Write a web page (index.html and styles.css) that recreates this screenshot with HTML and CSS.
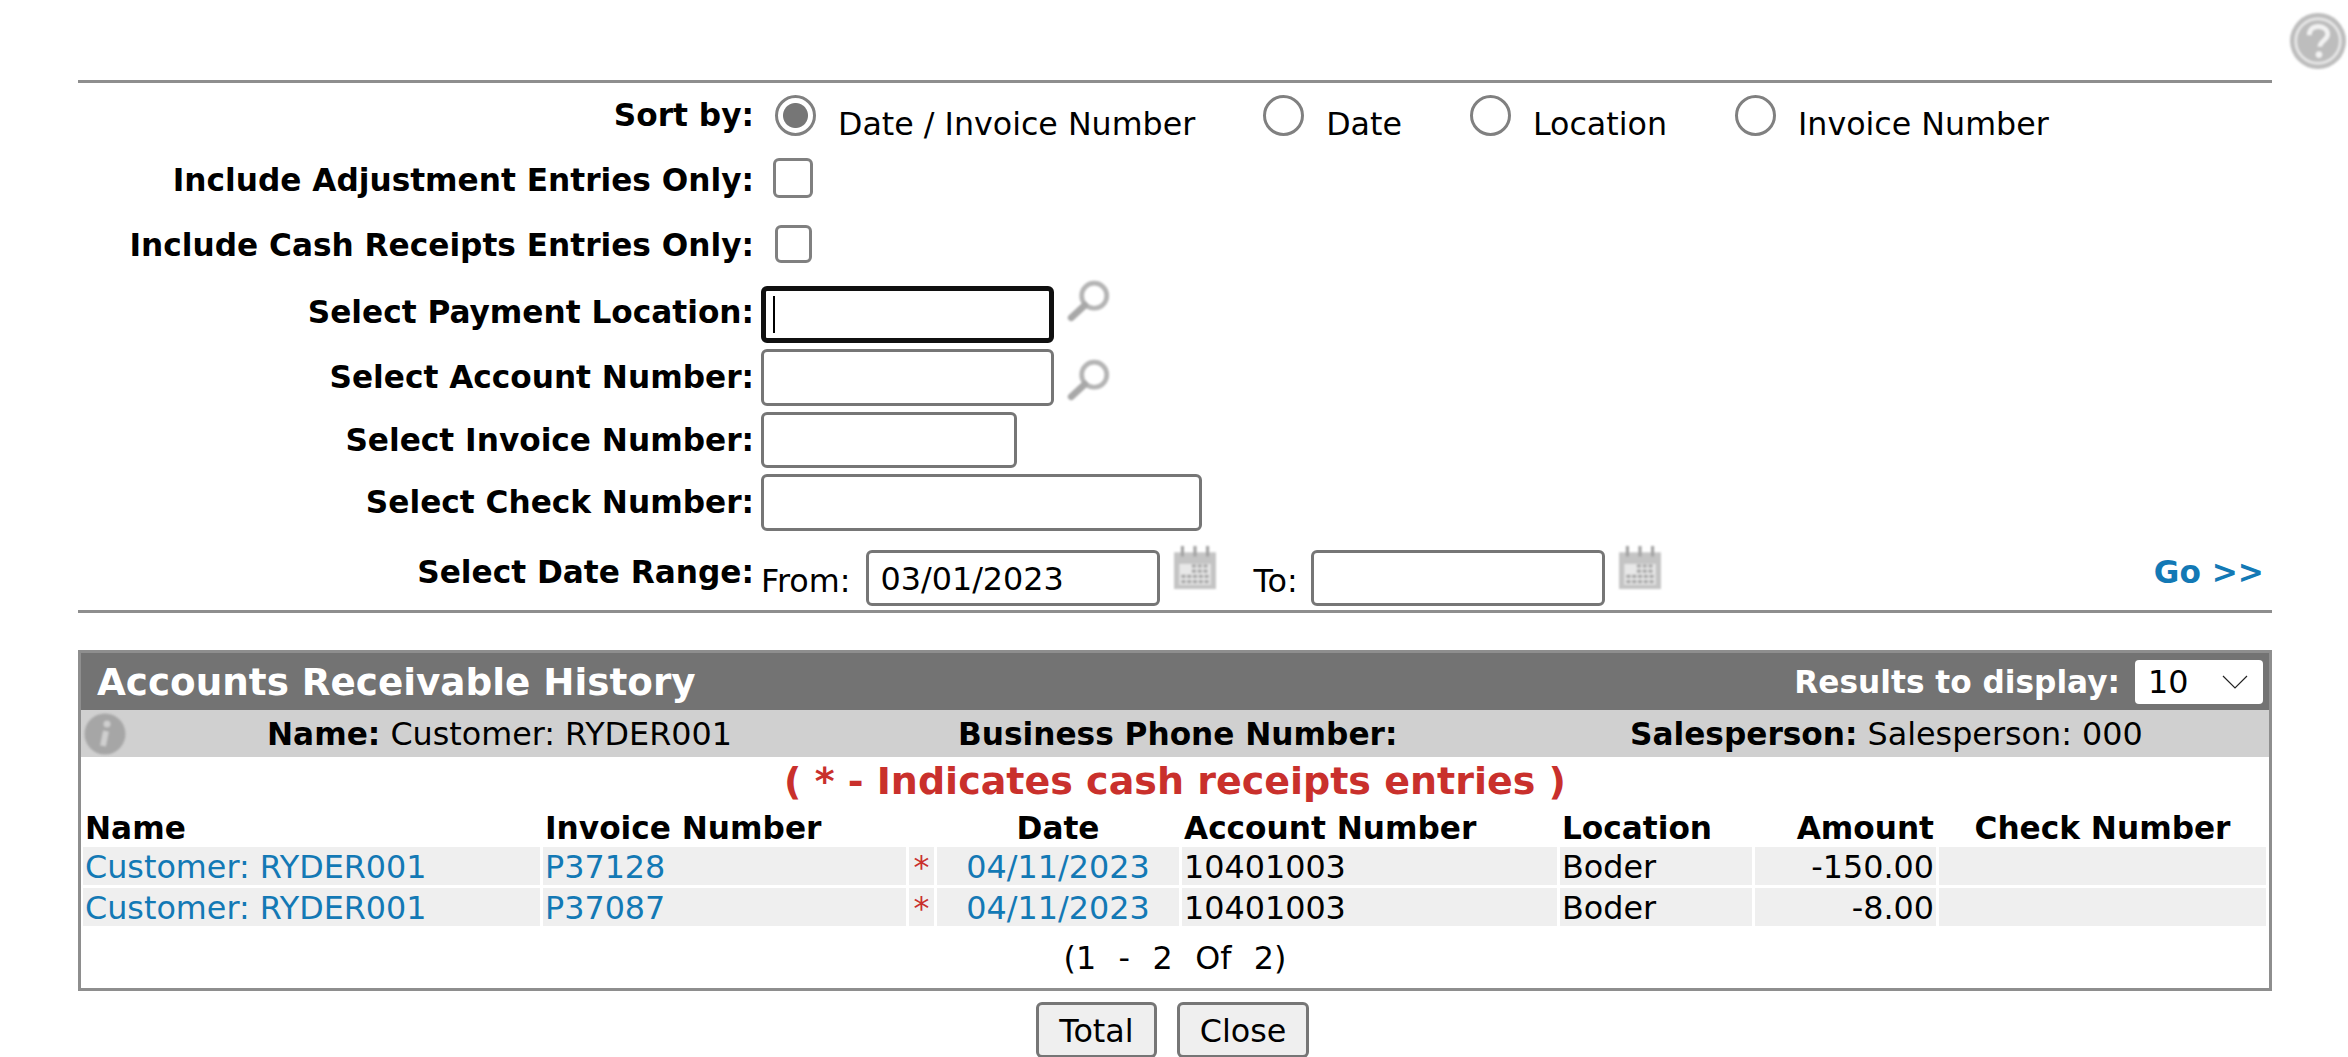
FILE: index.html
```html
<!DOCTYPE html>
<html lang="en">
<head>
  <meta charset="UTF-8"/>
  <title>Accounts Receivable History</title>
  <link rel="stylesheet" href="styles.css">
</head>
<body>

  <div class="help-bar">
    <svg class="help-icon" viewBox="0 0 60 60">
      <circle cx="30" cy="30" r="29" fill="#bdbdbd"/>
      <circle cx="30" cy="30" r="23" fill="none" stroke="#e6e6e6" stroke-width="3"/>
      <path d="M21 24c0-6 4-9 9.500-9s9.500 3.500 9.500 8c0 6-8 7-8 13" fill="none" stroke="#f2f2f2" stroke-width="5"/>
      <circle cx="31" cy="44" r="3.500" fill="#f2f2f2"/>
    </svg>
  </div>

  <div class="page">
    <form class="filters">
      <div class="row row-sort">
        <label class="row-label">Sort by:</label>
        <div class="radios">
          <label class="radio-opt"><input type="radio" name="sort" checked><span>Date / Invoice Number</span></label>
          <label class="radio-opt"><input type="radio" name="sort"><span>Date</span></label>
          <label class="radio-opt"><input type="radio" name="sort"><span>Location</span></label>
          <label class="radio-opt"><input type="radio" name="sort"><span>Invoice Number</span></label>
        </div>
      </div>
      <div class="row row-adj">
        <label class="row-label">Include Adjustment Entries Only:</label>
        <input type="checkbox" class="check">
      </div>
      <div class="row row-cash">
        <label class="row-label">Include Cash Receipts Entries Only:</label>
        <input type="checkbox" class="check check-small">
      </div>
      <div class="row row-payment">
        <label class="row-label">Select Payment Location:</label>
        <input type="text" class="field field-md focused">
        <svg class="lookup lookup-high" viewBox="0 0 44 44"><use href="#glass"/></svg>
      </div>
      <div class="row row-account">
        <label class="row-label">Select Account Number:</label>
        <input type="text" class="field field-md">
        <svg class="lookup lookup-low" viewBox="0 0 44 44"><use href="#glass"/></svg>
      </div>
      <div class="row">
        <label class="row-label">Select Invoice Number:</label>
        <input type="text" class="field field-sm">
      </div>
      <div class="row row-check">
        <label class="row-label">Select Check Number:</label>
        <input type="text" class="field field-lg">
      </div>
      <div class="row row-date">
        <label class="row-label">Select Date Range:</label>
        <span class="date-word">From:</span>
        <input type="text" class="field field-date" value="03/01/2023">
        <svg class="cal" viewBox="0 0 42 42"><use href="#calendar"/></svg>
        <span class="date-word date-to">To:</span>
        <input type="text" class="field field-date">
        <svg class="cal" viewBox="0 0 42 42"><use href="#calendar"/></svg>
        <a href="#" class="go">Go &gt;&gt;</a>
      </div>
    </form>

    <section class="panel">
      <div class="panel-head">
        <h2>Accounts Receivable History</h2>
        <div class="results">
          <label>Results to display:</label>
          <div class="select-box">10
            <svg viewBox="0 0 26 14"><path d="M1 1l12 12L25 1" fill="none" stroke="#222" stroke-width="1.200"/></svg>
          </div>
        </div>
      </div>
      <div class="info-row">
        <div class="info-icon-cell">
          <svg class="info-icon" viewBox="0 0 42 42">
            <circle cx="21" cy="21" r="20.500" fill="#a6a6a6"/>
            <circle cx="23" cy="11" r="3.500" fill="#cfcfcf"/>
            <path d="M22 18l-3 15" stroke="#cfcfcf" stroke-width="6" fill="none"/>
          </svg>
        </div>
        <div><b>Name:</b> Customer: RYDER001</div>
        <div><b>Business Phone Number:</b></div>
        <div><b>Salesperson:</b> Salesperson: 000</div>
      </div>
      <p class="legend">( * - Indicates cash receipts entries )</p>
      <table class="history">
        <colgroup>
          <col class="c-name"><col class="c-inv"><col class="c-star"><col class="c-date">
          <col class="c-acct"><col class="c-loc"><col class="c-amt"><col class="c-chk">
        </colgroup>
        <thead>
          <tr>
            <th>Name</th><th>Invoice Number</th><th></th><th class="center">Date</th>
            <th>Account Number</th><th>Location</th><th class="right">Amount</th><th class="center">Check Number</th>
          </tr>
        </thead>
        <tbody>
          <tr>
            <td><a href="#">Customer: RYDER001</a></td><td><a href="#">P37128</a></td><td class="star">*</td>
            <td class="center"><a href="#">04/11/2023</a></td><td>10401003</td><td>Boder</td><td class="right">-150.00</td><td></td>
          </tr>
          <tr>
            <td><a href="#">Customer: RYDER001</a></td><td><a href="#">P37087</a></td><td class="star">*</td>
            <td class="center"><a href="#">04/11/2023</a></td><td>10401003</td><td>Boder</td><td class="right">-8.00</td><td></td>
          </tr>
        </tbody>
      </table>
      <div class="pager">(1&nbsp; -&nbsp; 2&nbsp; Of&nbsp; 2)</div>
    </section>

    <div class="actions">
      <button type="button" class="btn-total">Total</button>
      <button type="button" class="btn-close">Close</button>
    </div>
  </div>

  <svg class="defs" width="0" height="0">
    <defs>
      <g id="glass">
        <circle cx="27" cy="16" r="12" fill="none" stroke="#b4b4b4" stroke-width="4.500"/>
        <path d="M18 25L5 37" stroke="#a8a8a8" stroke-width="6.500" stroke-linecap="round"/>
      </g>
      <g id="calendar">
        <rect x="1" y="7" width="40" height="35" fill="#c4c4c4"/>
        <path d="M9 1v10M21 1v10M33 1v10" stroke="#a2a2a2" stroke-width="3"/>
        <rect x="6" y="18" width="30" height="20" fill="#e8e8e8"/>
        <path d="M18 20h16M18 25h16M8 30h26M8 35h26" stroke="#a8a8a8" stroke-width="3" stroke-dasharray="4 1.500"/>
      </g>
    </defs>
  </svg>

</body>
</html>
```

FILE: styles.css
```css
html, body { height: 100%; overflow: hidden; }
body {
  margin: 0;
  background: #fff;
  color: #000;
  font-family: "DejaVu Sans", Verdana, sans-serif;
  font-size: 31.8px;
}
a { color: #1379b5; text-decoration: none; }
b, .row-label, .history th, .results label, .go { font-size: 31.2px; font-weight: bold; }

.help-bar { display: flex; justify-content: flex-end; height: 80px; padding: 12px 1px 0 0; box-sizing: border-box; }
.help-icon { width: 58px; height: 58px; filter: blur(1px); }
.defs { position: absolute; }

.page { margin: 0 76px 0 78px; }

/* Filter form */
.filters { border-top: 3px solid #8e8e8e; border-bottom: 3px solid #8e8e8e; padding: 12px 0 4px; }
.row { display: flex; align-items: center; margin-bottom: 6px; }
.row-label { width: 676px; margin-right: 7px; text-align: right; white-space: nowrap; }
.row-sort { margin-bottom: 22px; align-items: flex-start; }
.row-sort .row-label { padding-top: 2px; }
.row-adj { margin-bottom: 26px; }
.row-adj .row-label, .row-cash .row-label { padding-top: 3px; }
.row-cash { margin-bottom: 23px; }
.row-payment .row-label { margin-bottom: 5px; }
.row-account .row-label, .row-check .row-label { margin-bottom: 1px; }
.row-check { margin-bottom: 19px; }
.row-date { margin-bottom: 0; position: relative; }
.row-date .row-label { margin-bottom: 12px; }

.radios { display: flex; gap: 68px; margin-left: 14px; font-size: 31.7px; }
.radio-opt { display: flex; align-items: flex-end; gap: 22px; line-height: 26px; }
.radio-opt input {
  appearance: none;
  width: 41px; height: 41px;
  margin: 0;
  border: 3px solid #808080;
  border-radius: 50%;
  background: #fff;
}
.radio-opt input:checked { background: radial-gradient(circle, #767676 0 12px, #fff 13px); }
.radio-opt span { margin-bottom: -1px; }

.check {
  appearance: none;
  width: 40px; height: 40px;
  margin: 0 0 0 12px;
  border: 3px solid #808080;
  border-radius: 6px;
  background: #fff;
}
.check-small { width: 37px; height: 38px; margin-left: 14px; }

.field {
  box-sizing: border-box;
  height: 57px;
  margin: 0;
  padding: 0 12px;
  border: 3px solid #767676;
  border-radius: 6px;
  font: inherit;
  color: #000;
  background: #fff;
}
.field-md { width: 293px; }
.field-sm { width: 256px; height: 56px; }
.field-lg { width: 441px; }
.field-date { width: 294px; height: 56px; }
.focused {
  border: 5px solid #101010;
  background: linear-gradient(#000, #000) 7px center / 2px 37px no-repeat #fff;
}

.lookup { width: 46px; height: 46px; margin-left: 12px; filter: blur(0.8px); }
.lookup-high { margin-top: -25px; }
.lookup-low { margin-top: 6px; }
.cal { width: 44px; height: 44px; margin: -23px 0 0 13px; filter: blur(1px); }
.date-word { margin: 4px 15px 0 0; }
.date-to { margin-left: 37px; margin-right: 13px; }
.go { position: absolute; right: 8px; top: 4px; }

/* Results panel */
.panel { margin-top: 37px; border: 3px solid #8e8e8e; height: 335px; box-sizing: content-box; }
.panel-head {
  display: flex; justify-content: space-between; align-items: center;
  height: 57px;
  padding: 0 6px 0 16px;
  background: #737373;
  color: #fff;
}
.panel-head h2 { margin: 0; font-size: 37.3px; font-weight: bold; }
.results { display: flex; align-items: center; gap: 15px; }
.select-box {
  display: flex; justify-content: space-between; align-items: center;
  box-sizing: border-box;
  width: 128px; height: 44px;
  padding: 0 15px 0 13px;
  border-radius: 4px;
  background: #fff;
  color: #000;
}
.select-box svg { width: 26px; height: 14px; }

.info-row {
  display: grid;
  grid-template-columns: 186px 691px 672px 1fr;
  align-items: center;
  height: 47px;
  background: #d0d0d0;
}
.info-icon-cell { display: flex; padding-left: 3px; }
.info-icon { width: 42px; height: 42px; filter: blur(0.8px); }

.legend { margin: 0; height: 52px; line-height: 48px; text-align: center; color: #c9302c; font-size: 38px; font-weight: bold; }

.history { width: calc(100% + 1px); table-layout: fixed; border-collapse: separate; border-spacing: 3px; margin: 1px 0 0 -1px; }
.c-name { width: 457px; }
.c-inv { width: 363px; }
.c-star { width: 25px; }
.c-date { width: 242px; }
.c-acct { width: 375px; }
.c-loc { width: 192px; }
.c-amt { width: 181px; }
.history th { height: 31px; padding: 0 2px; line-height: 31px; text-align: left; white-space: nowrap; }
.history td { height: 38px; padding: 0 2px; background: #efefef; white-space: nowrap; }
.history .center { text-align: center; }
.history .right { text-align: right; }
.history .star { color: #c9302c; text-align: center; }

.pager { margin-top: 10px; text-align: center; word-spacing: 1.1px; }

.actions { display: flex; justify-content: center; gap: 20px; margin-top: 11px; padding-right: 5px; }
.actions button {
  box-sizing: border-box;
  height: 56px;
  padding: 0;
  border: 3px solid #767676;
  border-radius: 6px;
  background: #efefef;
  color: #000;
  font: inherit;
}
.btn-total { width: 121px; }
.btn-close { width: 132px; }
```
